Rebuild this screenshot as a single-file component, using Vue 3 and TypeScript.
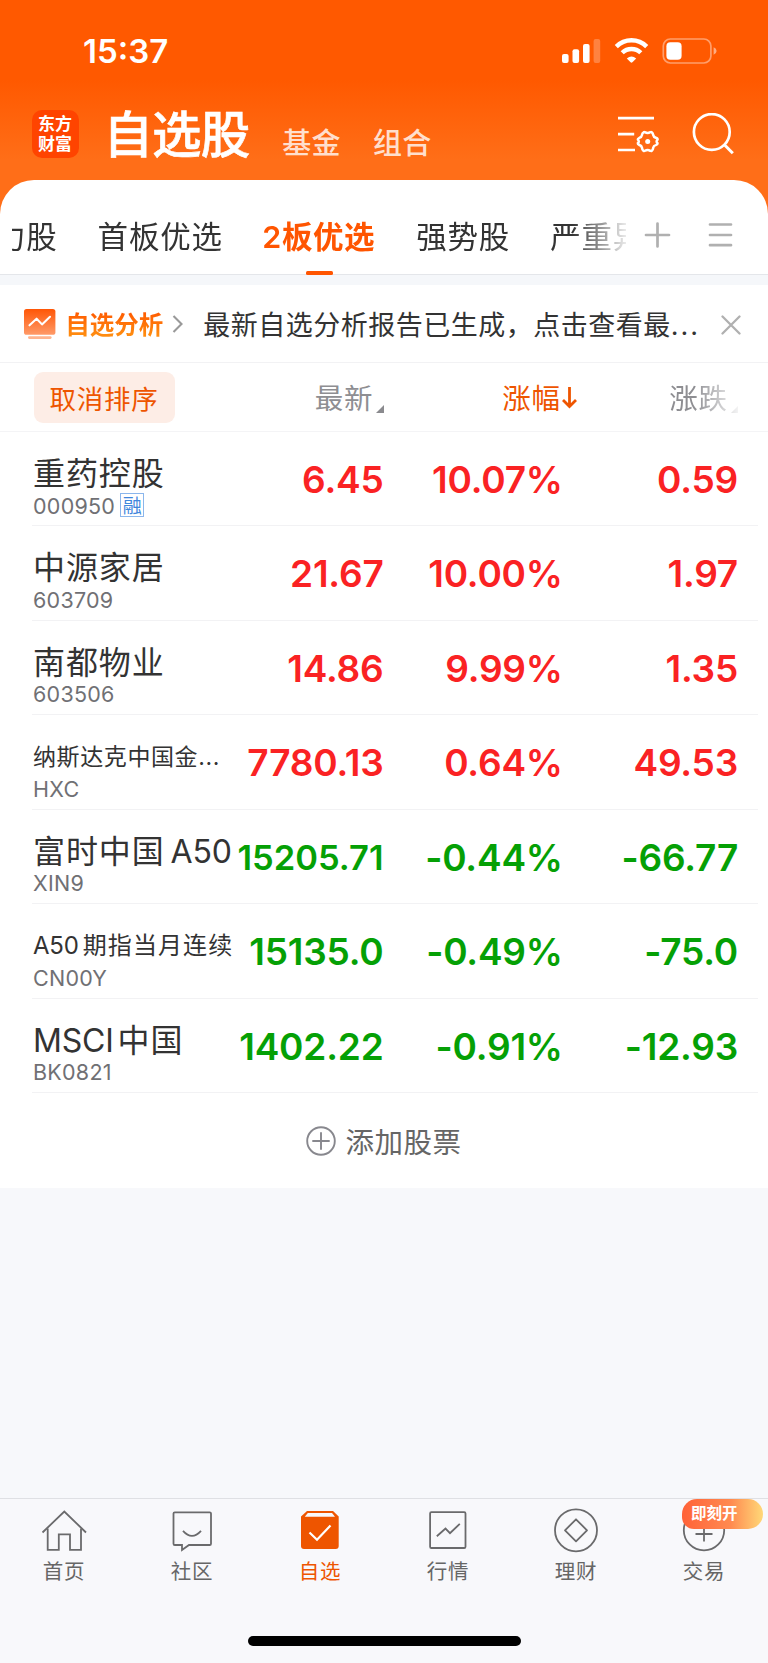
<script setup lang="ts">
interface Stock {
  name: string
  latin?: string
  latinFirst?: boolean
  size?: 'small' | 'medium'
  code: string
  margin?: boolean
  price: string
  compact?: boolean
  pct: string
  change: string
}

const stocks: Stock[] = [
  { name: '重药控股', code: '000950', margin: true, price: '6.45', pct: '10.07%', change: '0.59' },
  { name: '中源家居', code: '603709', price: '21.67', pct: '10.00%', change: '1.97' },
  { name: '南都物业', code: '603506', price: '14.86', pct: '9.99%', change: '1.35' },
  { name: '纳斯达克中国金...', size: 'small', code: 'HXC', price: '7780.13', pct: '0.64%', change: '49.53' },
  { name: '富时中国', latin: 'A50', code: 'XIN9', price: '15205.71', compact: true, pct: '-0.44%', change: '-66.77' },
  { name: '期指当月连续', latin: 'A50', latinFirst: true, size: 'medium', code: 'CN00Y', price: '15135.0', pct: '-0.49%', change: '-75.0' },
  { name: '中国', latin: 'MSCI', latinFirst: true, code: 'BK0821', price: '1402.22', pct: '-0.91%', change: '-12.93' },
]

const navItems = ['首页', '社区', '自选', '行情', '理财', '交易']
</script>

<template>
  <div class="screen">
    <header class="top">
      <div class="status">
        <span class="clock">15:37</span>
        <svg class="status-icons" width="156" height="28" viewBox="0 0 156 28" fill="#fff">
          <rect x="0" y="16" width="6.6" height="9" rx="2" />
          <rect x="10.5" y="11.3" width="6.6" height="13.7" rx="2" />
          <rect x="21" y="6" width="6.6" height="19" rx="2" />
          <rect x="31.6" y="1" width="6.6" height="24" rx="2" opacity=".25" />
          <g fill="none" stroke="#fff" stroke-width="4.4">
            <path d="M54.3 8.6 A21.5 21.5 0 0 1 84.7 8.6" />
            <path d="M60.2 14.8 A13.2 13.2 0 0 1 78.8 14.8" />
          </g>
          <path d="M64.8 20.5 Q69.5 16.5 74.2 20.5 L70.4 24.3 Q69.5 25.2 68.6 24.3 Z" />
          <rect x="101.3" y="1" width="47.6" height="24" rx="7" fill="none" stroke="#fff" stroke-width="1.7" opacity=".42" />
          <rect x="104.4" y="4.2" width="15.2" height="17.6" rx="4" />
          <path d="M151.6 9.2 Q154.6 10.4 154.6 13 Q154.6 15.6 151.6 16.8 Z" opacity=".5" />
        </svg>
      </div>
      <div class="titlebar">
        <div class="logo"><span>东方</span><span>财富</span></div>
        <h1>自选股</h1>
        <span class="sub">基金</span>
        <span class="sub">组合</span>
        <svg class="tools" width="118" height="44" viewBox="0 0 118 44" fill="none" stroke="#fff">
          <path d="M0 5.2H36M0 21.2H16.2M0 37H17" stroke-width="2.7" />
          <path
            d="M25.6 19.3 Q26.2 18.7 27 19.2 Q29.6 20.7 32.3 19.2 Q33.1 18.7 33.8 19.3 Q35 20 35.2 22 Q35.6 24.2 37.8 24.7 Q39.8 25.3 39.6 26.6 Q37.6 28.4 39.6 30.2 Q39.7 31.5 37.8 32.1 Q35.6 32.6 35.2 34.8 Q35 36.8 33.8 37.7 Q33.1 38.3 32.3 37.8 Q29.6 36.2 27 37.8 Q26.2 38.3 25.4 37.7 Q24.2 36.8 24 34.8 Q23.6 32.6 21.4 32 Q19.6 31.2 19.8 30.2 Q21.8 28.4 19.8 26.6 Q19.6 25.6 21.4 24.8 Q23.6 24.2 24 22 Q24.2 20 25.6 19.3Z"
            stroke-width="2.5"
            stroke-linejoin="round"
          />
          <circle cx="29.7" cy="28.6" r="2.5" fill="#fff" stroke="none" />
          <circle cx="93.8" cy="19" r="17.9" stroke-width="2.7" />
          <path d="M106.4 31.8 L114.8 40.3" stroke-width="3" />
        </svg>
      </div>
    </header>

    <main class="panel">
      <nav class="tabs">
        <div class="scroller">
          <div class="track">
            <span>力股</span>
            <span>首板优选</span>
            <span class="active">2板优选</span>
            <span>强势股</span>
            <span>严重异</span>
          </div>
        </div>
        <svg class="tab-tools" width="90" height="28" viewBox="0 0 90 28" stroke="#b0b0b0" stroke-width="2.7" stroke-linecap="round">
          <path d="M2 14H25M13.5 2.5V25.5M66 3.5H87M66 14H87M66 24.2H87" />
        </svg>
      </nav>

      <section class="notice">
        <svg width="32" height="31" viewBox="0 0 32 31">
          <defs>
            <linearGradient id="chartFill" x1="0" y1="0" x2="0" y2="1">
              <stop offset="0" stop-color="#ff5606" />
              <stop offset="1" stop-color="#ff9a68" />
            </linearGradient>
          </defs>
          <rect width="31.4" height="25.8" rx="2.6" fill="url(#chartFill)" />
          <rect x="4" y="27.3" width="23.6" height="2.6" rx="1.3" fill="#ffb48e" />
          <path d="M5.5 16.3 L12.6 9.7 L18 15.4 L26 7.8" fill="none" stroke="#fff" stroke-width="2.1" stroke-linecap="round" stroke-linejoin="round" />
        </svg>
        <b>自选分析</b>
        <svg class="chevron" width="12" height="18" viewBox="0 0 12 18" fill="none" stroke="#999" stroke-width="2.1">
          <path d="M1.5 1 L9.5 9 L1.5 17" />
        </svg>
        <p>最新自选分析报告已生成，点击查看最<i>...</i></p>
        <svg class="close" width="20" height="20" viewBox="0 0 20 20" stroke="#b0b0b0" stroke-width="2.3" stroke-linecap="round">
          <path d="M1.5 1.5L18.5 18.5M18.5 1.5L1.5 18.5" />
        </svg>
      </section>

      <div class="grid head">
        <button>取消排序</button>
        <span class="col">最新<svg width="8" height="8" viewBox="0 0 8 8"><path d="M8 0V8H0Z" fill="#8a8a8e" /></svg></span>
        <span class="col sorted">涨幅<svg width="15" height="22" viewBox="0 0 15 22" fill="none" stroke="#ee5500" stroke-width="2.8"><path d="M7.5 0V19.5M1 13 L7.5 19.5 L14 13" /></svg></span>
        <span class="col faded">涨跌<svg width="8" height="8" viewBox="0 0 8 8"><path d="M8 0V8H0Z" fill="#8a8a8e" /></svg></span>
      </div>

      <div v-for="s in stocks" :key="s.code" class="grid row" :class="s.change.startsWith('-') ? 'down' : 'up'">
        <div class="ident">
          <div class="name" :class="s.size"><em v-if="s.latin && s.latinFirst" class="lead">{{ s.latin }}</em><span>{{ s.name }}</span><em v-if="s.latin && !s.latinFirst" class="tail">{{ s.latin }}</em></div>
          <div class="code">{{ s.code }}<span v-if="s.margin" class="badge">融</span></div>
        </div>
        <span class="num" :class="{ compact: s.compact }">{{ s.price }}</span>
        <span class="num pct">{{ s.pct }}</span>
        <span class="num">{{ s.change }}</span>
      </div>

      <div class="add">
        <svg width="30" height="30" viewBox="0 0 30 30" fill="none" stroke="#88888e" stroke-width="1.9">
          <circle cx="15" cy="15" r="13.8" />
          <path d="M6.3 15H23.7M15 6.3V23.7" />
        </svg>
        <span>添加股票</span>
      </div>
    </main>

    <footer class="dock">
      <div v-for="(label, i) in navItems" :key="label" class="item" :class="{ on: i === 2 }">
        <svg width="48" height="48" viewBox="0 0 48 48" fill="none" stroke="#6a6a6c" stroke-width="1.8">
          <g v-if="i === 0">
            <path d="M2.5 26.5 L24.3 5.5 L46 26.5" />
            <path d="M7.7 22.5V43.8H18.8V28.3H30V43.8H41V22.5" />
          </g>
          <path v-else-if="i === 1" d="M7.2 6.3H41.7Q43 6.3 43 7.6V37.7Q43 39 41.7 39H21L14 44V39H6.8Q5.5 39 5.5 37.7V7.6Q5.5 6.3 6.8 6.3ZM15 24.8Q24 35 33 24.8" />
          <g v-else-if="i === 2" stroke="none">
            <path d="M11 5H37L42.7 10.5V40Q42.7 43 39.7 43H8Q5 43 5 40V10.5Z" fill="#ee5500" />
            <path d="M11.8 6.9H36L39 10.8H8.8Z" fill="#f9f9fb" />
            <path d="M13.5 26.5 L21 33.8 L34.5 19.5" fill="none" stroke="#fff" stroke-width="2.2" />
          </g>
          <path v-else-if="i === 3" d="M6.1 7.5Q6.1 6.2 7.4 6.2H40.2Q41.5 6.2 41.5 7.5V40.7Q41.5 42 40.2 42H7.4Q6.1 42 6.1 40.7ZM12.8 30.2 L21.5 22.6 L26 27.2 L35.8 17.8" />
          <g v-else-if="i === 4">
            <circle cx="24" cy="24.3" r="21" />
            <path d="M24 13.3 L35 24.3 L24 35.3 L13 24.3Z" stroke-linejoin="round" />
          </g>
          <g v-else>
            <circle cx="24" cy="24.2" r="20.2" />
            <path d="M15.5 28H32.5M24 19V35.5" />
          </g>
        </svg>
        <span>{{ label }}</span>
        <div v-if="i === 5" class="promo">即刻开</div>
      </div>
      <div class="home-bar"></div>
    </footer>
  </div>
</template>

<style>
body {
  background: #f7f8fb;
}
</style>

<style scoped>
* {
  box-sizing: border-box;
}
.screen {
  width: 768px;
  height: 1663px;
  position: relative;
  overflow: hidden;
  display: flex;
  flex-direction: column;
  background: linear-gradient(#ff5900 80px, #ff6e18 160px, #ff6e18 230px, #f7f8fb 230px);
  font-family: Inter, 'Noto Sans CJK SC', sans-serif;
  color: #333;
  white-space: nowrap;
}
.top {
  height: 179.5px;
  flex: none;
}
.status {
  height: 100px;
  padding: 38px 50.5px 0 83px;
  display: flex;
  justify-content: space-between;
}
.clock {
  color: #fff;
  font-weight: 600;
  font-size: 33px;
  line-height: 27px;
}
.titlebar {
  display: flex;
  height: 79px;
  padding-left: 31.5px;
  color: #fff;
}
.logo {
  width: 47px;
  height: 48px;
  margin-top: 10px;
  padding-top: 5px;
  border-radius: 10px;
  background: #ff4400;
  display: flex;
  flex-direction: column;
  align-items: center;
  font-size: 17px;
  font-weight: 700;
  line-height: 19.5px;
}
h1 {
  margin: 0 0 0 25px;
  font-size: 49.5px;
  font-weight: 500;
  line-height: 70px;
  letter-spacing: -0.9px;
  -webkit-text-stroke: 0.6px #fff;
}
.sub {
  margin-left: 33px;
  font-size: 29px;
  font-weight: 500;
  line-height: 88px;
  letter-spacing: 0.3px;
  color: #ffdfcd;
}
.sub + .sub {
  margin-left: 32px;
}
.tools {
  margin: 13px 0 0 auto;
  margin-right: 32px;
}
.panel {
  height: 1008.3px;
  flex: none;
  background: #fff;
  border-radius: 34px 34px 0 0;
}
.tabs {
  height: 95px;
  border-bottom: 1px solid #e4e6ea;
  display: flex;
  padding-left: 12px;
}
.scroller {
  width: 614px;
  height: 96px;
  overflow: hidden;
  flex: none;
  mask-image: linear-gradient(90deg, #000 560px, transparent 620px);
}
.track {
  display: flex;
  gap: 40px;
  margin-left: -17px;
  font-size: 30.5px;
  line-height: 113px;
  letter-spacing: 0.8px;
}
.active {
  position: relative;
  color: #ff5500;
  font-weight: 600;
  letter-spacing: 0.6px;
  margin: 0 1px 0 -0.5px;
}
.active::after {
  content: '';
  position: absolute;
  left: 43.5px;
  top: 91.5px;
  width: 27.5px;
  height: 3.8px;
  border-radius: 1.5px;
  background: #ff5500;
}
.tab-tools {
  margin: 41.5px 0 0 18px;
}
.notice {
  height: 88.5px;
  border-top: 10px solid #f5f7fa;
  border-bottom: 1.5px solid #f2f2f4;
  padding-left: 23.7px;
  display: flex;
}
.notice > svg {
  flex: none;
  margin-top: 24.7px;
}
.notice b {
  margin-left: 9.5px;
  font-size: 24.5px;
  letter-spacing: 0;
  line-height: 80px;
  background: linear-gradient(#ff5a00 35%, #ff8c10 65%);
  background-clip: text;
  color: transparent;
}
.notice .chevron {
  margin: 30.5px 0 0 9px;
}
.notice p {
  margin: 0 0 0 19px;
  font-size: 27px;
  line-height: 82px;
  letter-spacing: 0.5px;
}
.notice i {
  font-style: normal;
  letter-spacing: 2px;
}
.notice .close {
  margin: 30.5px 27.5px 0 auto;
}
.grid {
  display: grid;
  grid-template-columns: 180px 171px 177.5px 177px;
  margin-left: 32px;
  width: 726px;
}
.head {
  height: 69px;
  margin-left: 0;
  padding-left: 32px;
  width: 768px;
  border-bottom: 1.5px solid #f4f4f6;
}
.head button {
  width: 141px;
  height: 51px;
  margin: 9.3px 0 0 1.5px;
  padding: 0;
  border: 0;
  border-radius: 9px;
  background: #fdede6;
  color: #ee5500;
  font: 26.5px/49px 'Noto Sans CJK SC', sans-serif;
  letter-spacing: 0.8px;
}
.col {
  display: flex;
  justify-content: flex-end;
  font-size: 28.5px;
  line-height: 71.5px;
  letter-spacing: 0.6px;
  color: #8e8e92;
}
.col svg {
  flex: none;
  margin: 41.5px -1px 0 3px;
}
.sorted {
  color: #ee5500;
}
.sorted svg {
  margin: 24px -16px 0 1px;
}
.faded {
  mask-image: linear-gradient(90deg, #000 133px, transparent 182px);
}
.row {
  height: 94.43px;
  border-bottom: 1.4px solid #f2f2f4;
}
.ident {
  padding-left: 1px;
  min-width: 0;
}
.name {
  height: 60.5px;
  font-size: 32px;
  line-height: 84px;
  letter-spacing: 0.9px;
}
.name em {
  font-style: normal;
  letter-spacing: -0.2px;
}
.lead {
  margin-right: 4px;
}
.tail {
  margin-left: 6px;
}
.name.small {
  font-size: 23px;
  letter-spacing: 0.6px;
}
.name.medium {
  font-size: 24px;
  letter-spacing: 1.1px;
}
.code {
  display: flex;
  font-size: 21.5px;
  line-height: 26px;
  letter-spacing: 0.25px;
  color: #707074;
}
.badge {
  width: 24px;
  height: 24px;
  margin: 0.5px 0 0 5px;
  border: 1.5px solid #8bb6ec;
  font: 19px/21px 'Noto Sans CJK SC', sans-serif;
  letter-spacing: 0;
  display: flex;
  justify-content: center;
  color: #3f86dc;
}
.num {
  text-align: right;
  font-size: 37px;
  font-weight: 600;
  line-height: 96.5px;
  letter-spacing: -0.2px;
  margin-right: -0.5px;
}
.num.pct {
  margin-right: -2.3px;
}
.num.compact {
  font-size: 34.5px;
  letter-spacing: 0;
}
.up .num {
  color: #fa2223;
}
.down .num {
  color: #05a005;
}
.add {
  display: flex;
  justify-content: center;
  align-items: center;
  height: 96px;
  gap: 9px;
  font-size: 28.5px;
  letter-spacing: 0.5px;
  color: #666;
}
.add span {
  margin-top: -0.5px;
}
.dock {
  position: relative;
  margin-top: auto;
  height: 165px;
  border-top: 1px solid #dfe0e4;
  display: grid;
  grid-template-columns: repeat(6, 128px);
  background: #f8f8fb;
}
.item {
  position: relative;
  display: flex;
  flex-direction: column;
  align-items: center;
  padding-top: 6.5px;
  font-size: 20.5px;
  line-height: 35.5px;
  letter-spacing: 0.7px;
  color: #666;
}
.item.on {
  color: #ee5500;
}
.promo {
  position: absolute;
  left: 42px;
  top: -0.5px;
  width: 81px;
  height: 30px;
  padding-left: 9px;
  border-radius: 15px 15px 15px 12px;
  background: linear-gradient(90deg, #ff6238, #ff8a50 60%, #ffd878);
  color: #fff;
  font-size: 15.5px;
  font-weight: 700;
  line-height: 30.5px;
  letter-spacing: 0;
}
.home-bar {
  position: absolute;
  left: 247.5px;
  top: 137px;
  width: 273.5px;
  height: 10px;
  border-radius: 5px;
  background: #000;
}
</style>
